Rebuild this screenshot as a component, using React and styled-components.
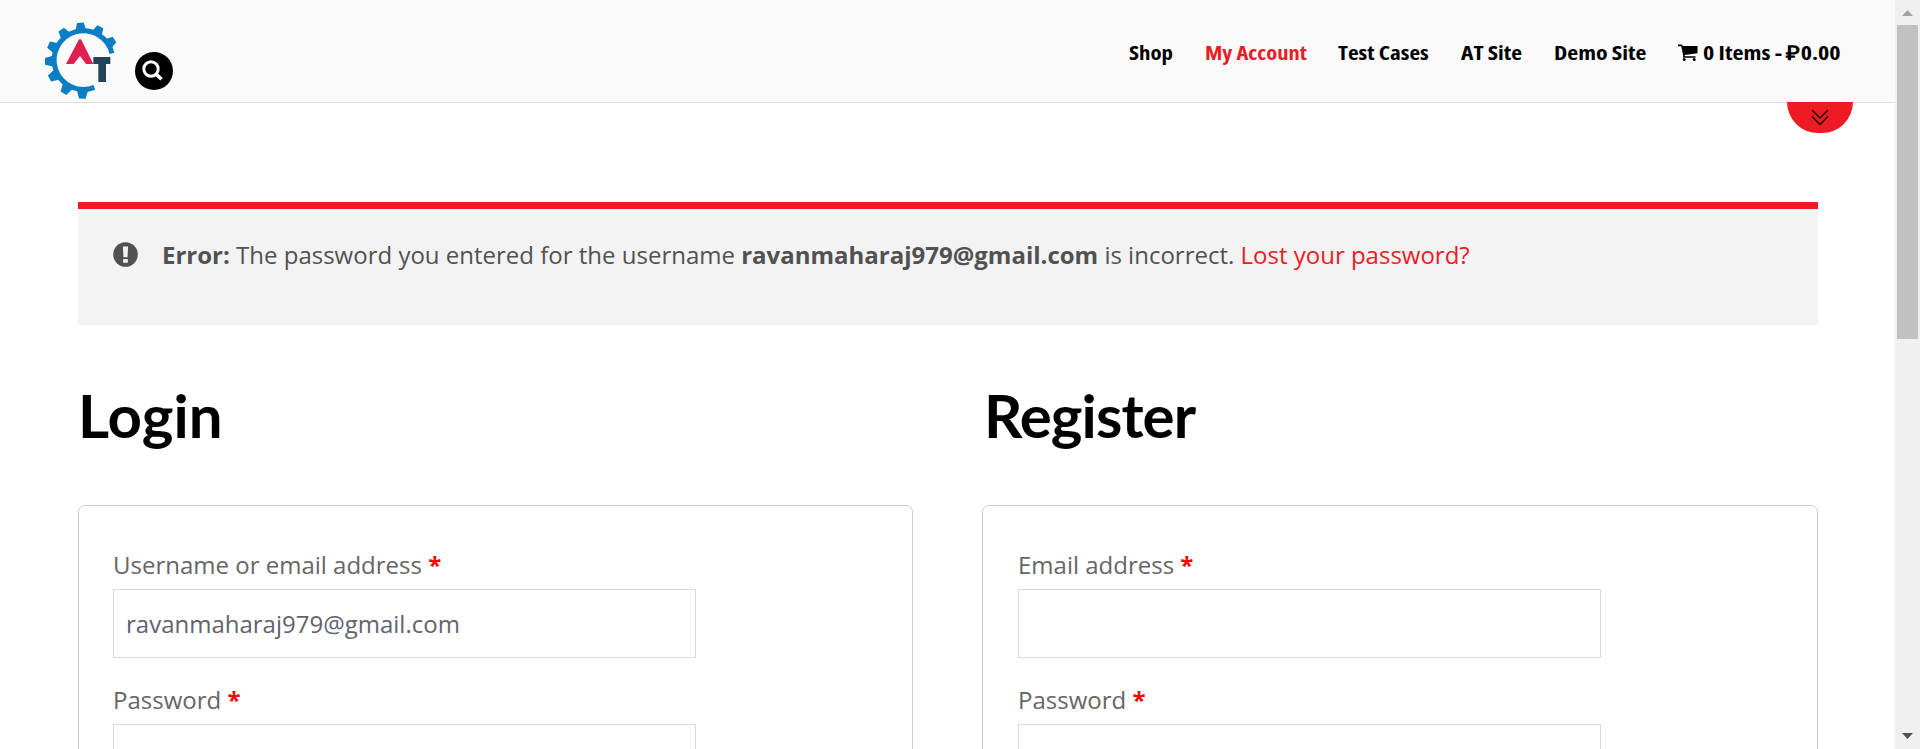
import React from "react";
import styled, { createGlobalStyle } from "styled-components";

const GlobalStyle = createGlobalStyle`
  * { box-sizing: border-box; }
  html, body { margin: 0; height: 100%; overflow: hidden; background: #fff; }
  body { font-family: "Open Sans", sans-serif; font-size: 24px; color: #666; }
`;

const Window = styled.div`
  display: flex;
  height: 749px;
  width: 1920px;
  overflow: hidden;
`;

const Page = styled.div`
  flex: 1;
  min-width: 0;
  overflow: hidden;
`;

const Header = styled.header`
  display: flex;
  position: relative;
  height: 103px;
  padding: 0 54px 0 43px;
  background: #fafafa;
  border-bottom: 1px solid #ddd;
`;

const Logo = styled.svg`
  width: 76px;
  height: 78px;
  margin-top: 22px;
`;

const SearchButton = styled.button`
  display: flex;
  align-items: center;
  justify-content: center;
  width: 38px;
  height: 38px;
  margin: 52px 0 0 16px;
  padding: 0 2px 0 0;
  border: 0;
  border-radius: 50%;
  background: #000;
`;

const Nav = styled.nav`
  display: flex;
  gap: 31px;
  height: 103px;
  margin-left: auto;
  padding-top: 38px;
  font-family: "Open Sans", sans-serif;
  font-size: 20px;
  font-weight: 700;
  font-stretch: 75%;
  line-height: 30px;
`;

const NavLink = styled.a`
  display: flex;
  align-items: center;
  height: 30px;
  width: ${(p) => p.$width}px;
  white-space: nowrap;
  color: ${(p) => (p.$active ? "#ed1c24" : "#000")};

  svg { margin-right: 5px; flex: none; }
`;

const NavText = styled.span`
  transform: scaleX(${(p) => p.$stretch});
  transform-origin: left center;
`;

const PullTab = styled.div`
  position: absolute;
  top: 102px;
  right: 42px;
  width: 66px;
  height: 31px;
  border-radius: 0 0 33px 33px;
  background: #ed1c24;

  svg { display: block; margin: 7px 0 0 24px; }
`;

const Main = styled.main`
  padding: 99px 77px 0 78px;
`;

const ErrorNotice = styled.div`
  display: flex;
  height: 123px;
  padding: 27px 35px;
  border-top: 7px solid #ed1c24;
  background: #f3f3f3;
  color: #515151;
  line-height: 38px;
  white-space: pre;

  svg { margin: 6px 24px 0 0; flex: none; }
`;

const NoticeLink = styled.a`
  color: #ed1c24;
`;

const Columns = styled.div`
  display: grid;
  grid-template-columns: 835px 836px;
  justify-content: space-between;
`;

const Heading = styled.h2`
  height: 84px;
  margin: 48px 0 48px;
  padding-left: ${(p) => p.$indent || 0}px;
  font-family: Lato, sans-serif;
  font-size: 60px;
  font-weight: 700;
  line-height: 84px;
  letter-spacing: ${(p) => p.$spacing}px;
  color: #000;
`;

const Card = styled.form`
  height: 420px;
  padding: 39px ${(p) => p.$inset}px;
  border: 1px solid #ccc;
  border-radius: 7px;
`;

const Field = styled.div`
  height: 135px;
`;

const Label = styled.label`
  display: block;
  height: 44px;
  line-height: 40px;
`;

const Required = styled.span`
  color: red;
  font-weight: 700;
`;

const Input = styled.input`
  display: block;
  width: 583px;
  height: 69px;
  padding: 0 12px;
  border: 1px solid #dadada;
  outline: 0;
  background: #fff;
  font-family: "Open Sans", sans-serif;
  font-size: 24px;
  color: #5f6270;
`;

const Scrollbar = styled.div`
  display: flex;
  flex-direction: column;
  align-items: center;
  width: 25px;
  background: #f0f0f0;
`;

const Thumb = styled.div`
  width: 21px;
  height: 314px;
  background: #c1c1c1;
`;

const ArrowBox = styled.div`
  display: flex;
  align-items: center;
  justify-content: center;
  height: 25px;
  padding-bottom: ${(p) => (p.$end ? 1 : 0)}px;
  margin-top: ${(p) => (p.$end ? "auto" : 0)};
`;

const navItems = [
  { text: "Shop", width: 45, stretch: 1.14 },
  { text: "My Account", width: 102, stretch: 1.125, active: true },
  { text: "Test Cases", width: 92, stretch: 1.16 },
  { text: "AT Site", width: 62, stretch: 1.18 },
  { text: "Demo Site", width: 93, stretch: 1.19 },
  { text: "0 Items - ₽0.00", width: 163, stretch: 1.2, cart: true },
];

const teeth = [-94, -63, -34, -125, -155, 179, 152, 121, 91];

function GearLogo() {
  return (
    <Logo viewBox="39 36 228 234">
      <path d="M246 130A88 88 0 1 0 193 232" fill="none" stroke="#0a7dc5" strokeWidth="15" />
      {teeth.map((a) => (
        <path key={a} d="M88 -17L114 -10V10L88 17Z" fill="#0a7dc5" transform={`translate(159 152) rotate(${a})`} />
      ))}
      <path d="M108 162L147 88H153L190 162H168L150 138L131 162Z" fill="#df1f50" />
      <path d="M190 141H241V162H228V216H205V162H190Z" fill="#21435c" />
    </Logo>
  );
}

function CartIcon() {
  return (
    <svg width="20" height="18" viewBox="0 0 20 18">
      <path d="M0 0.5H4L4.8 2H19.5V9.3L6.6 11L6.9 12.3H17.5V13.8H5L5.2 11.8L3.3 2.2H0Z" />
      <circle cx="6.2" cy="15.4" r="1.5" />
      <circle cx="16.2" cy="15.4" r="1.5" />
    </svg>
  );
}

function FormField({ label, value = "", type = "text" }) {
  return (
    <Field>
      <Label>{label} <Required>*</Required></Label>
      <Input type={type} defaultValue={value} />
    </Field>
  );
}

export default function App() {
  return (
    <Window>
      <GlobalStyle />
      <Page>
        <Header>
          <GearLogo />
          <SearchButton aria-label="Search">
            <svg width="22" height="22" viewBox="0 0 22 22" fill="none" stroke="#fff">
              <circle cx="9" cy="9" r="7.2" strokeWidth="3" />
              <path d="M13.8 13.8L19.5 19.3" strokeWidth="3.5" />
            </svg>
          </SearchButton>
          <Nav>
            {navItems.map((item) => (
              <NavLink key={item.text} $width={item.width} $active={item.active}>
                {item.cart && <CartIcon />}
                <NavText $stretch={item.stretch}>{item.text}</NavText>
              </NavLink>
            ))}
          </Nav>
          <PullTab>
            <svg width="18" height="17" viewBox="0 0 18 17" fill="none" stroke="#210709" strokeWidth="1.5">
              <path d="M1 1L9 9L17 1M1 7.5L9 15.5L17 7.5" />
            </svg>
          </PullTab>
        </Header>
        <Main>
          <ErrorNotice>
            <svg width="25" height="25" viewBox="0 0 25 25">
              <circle cx="12.5" cy="12.5" r="12.3" fill="#515151" />
              <path d="M9.9 4.5H15.1L14.5 15.3H10.5ZM10.2 17H14.8V20.7H10.2Z" fill="#f3f3f3" />
            </svg>
            <span>
              <strong>Error:</strong> The password you entered for the username{" "}
              <strong>ravanmaharaj979@gmail.com</strong> is incorrect. <NoticeLink>Lost your password?</NoticeLink>
            </span>
          </ErrorNotice>
          <Columns>
            <section>
              <Heading $spacing={0}>Login</Heading>
              <Card $inset={34}>
                <FormField label="Username or email address" value="ravanmaharaj979@gmail.com" />
                <FormField label="Password" type="password" />
              </Card>
            </section>
            <section>
              <Heading $spacing={-0.9} $indent={2}>Register</Heading>
              <Card $inset={35}>
                <FormField label="Email address" />
                <FormField label="Password" type="password" />
              </Card>
            </section>
          </Columns>
        </Main>
      </Page>
      <Scrollbar>
        <ArrowBox>
          <svg width="11" height="6" viewBox="0 0 11 6"><path d="M0 6L5.5 0L11 6Z" fill="#a3a3a3" /></svg>
        </ArrowBox>
        <Thumb />
        <ArrowBox $end>
          <svg width="11" height="6" viewBox="0 0 11 6"><path d="M0 0H11L5.5 6Z" fill="#505050" /></svg>
        </ArrowBox>
      </Scrollbar>
    </Window>
  );
}
